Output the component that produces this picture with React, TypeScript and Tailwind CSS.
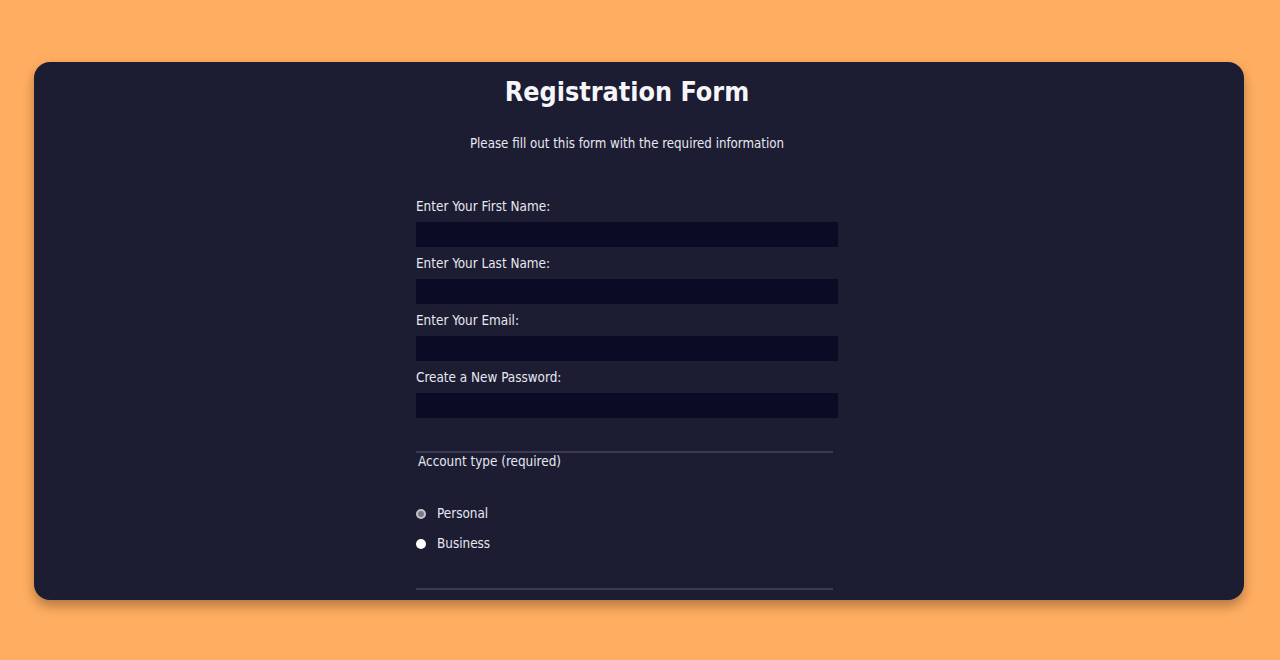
const FIELDS = [
  { id: 'first', label: 'Enter Your First Name:' },
  { id: 'last', label: 'Enter Your Last Name:' },
  { id: 'email', label: 'Enter Your Email:' },
  { id: 'password', label: 'Create a New Password:' },
];

export default function App() {
  return (
    <div className="flex h-[660px] w-full items-start justify-center bg-[#ffad60] pt-[62px] font-['DejaVu_Sans_Condensed','DejaVu_Sans',sans-serif] text-[#e8e8f0]">
      <div className="h-[538px] w-[1210px] -translate-x-[1px] overflow-hidden rounded-2xl bg-[#1c1c33] shadow-[0_6px_12px_rgba(0,0,0,0.3)]">
        <div className="mx-auto flex w-[422px] -translate-x-[12px] flex-col">
          <h1 className="mt-[14px] whitespace-nowrap text-center text-[26.7px] font-bold leading-[32px] text-[#f5f5fa]">Registration Form</h1>
          <p className="mt-[28px] whitespace-nowrap text-center text-[13.2px] leading-[16px]">Please fill out this form with the required information</p>

          <form className="mt-[47px] flex flex-col">
            {FIELDS.map((f) => (
              <div key={f.id} className="flex flex-col">
                <label htmlFor={f.id} className="text-[13.4px] leading-[16px]">{f.label}</label>
                <input id={f.id} className="mt-[7px] mb-[9px] h-[25px] w-full bg-[#0b0b26] outline-none" />
              </div>
            ))}

            <div className="mt-[24px] w-[417px] border-t-2 border-b-2 border-[#3a3a52] pb-[36px]">
              <div className="ml-[2px] mt-[1px] text-[13.4px] leading-[16px]">Account type (required)</div>
              <div className="mt-[36px] flex items-center gap-[11px] text-[13.4px] leading-[16px]">
                <span className="h-[10px] w-[10px] rounded-full border-[2px] border-[#c4c4cc] bg-[#7a7a85]" />
                <span>Personal</span>
              </div>
              <div className="mt-[14px] flex items-center gap-[11px] text-[13.4px] leading-[16px]">
                <span className="h-[10px] w-[10px] rounded-full bg-white" />
                <span>Business</span>
              </div>
            </div>
          </form>
        </div>
      </div>
    </div>
  );
}
